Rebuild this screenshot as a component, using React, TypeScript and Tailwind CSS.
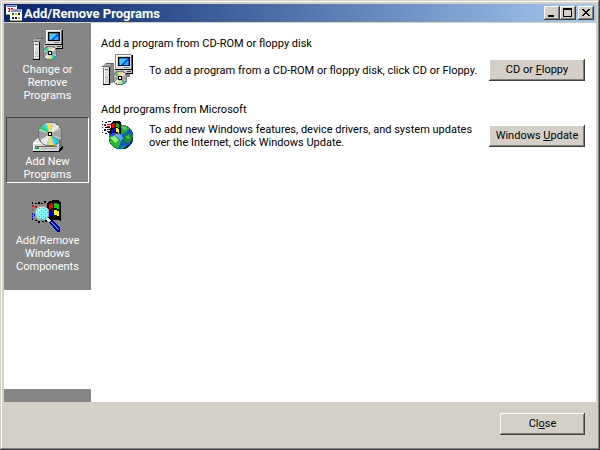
import React from "react";

const raised =
  "bg-[#d4d0c8] shadow-[inset_-1px_-1px_#404040,inset_1px_1px_#ffffff,inset_-2px_-2px_#808080]";

function Disc({ cx, cy, r }: { cx: number; cy: number; r: number }) {
  const at = (deg: number) => {
    const a = (deg * Math.PI) / 180;
    return `${cx + r * Math.cos(a)},${cy + r * Math.sin(a)}`;
  };
  const wedge = (from: number, to: number, fill: string) => (
    <polygon points={`${cx},${cy} ${at(from)} ${at((from + to) / 2)} ${at(to)}`} fill={fill} />
  );
  return (
    <g>
      <circle cx={cx} cy={cy} r={r} fill="#c6c6c6" />
      {wedge(150, 195, "#9c9c9c")}
      {wedge(-25, 20, "#a5a5a5")}
      {wedge(210, 228, "#31ce63")}
      {wedge(228, 246, "#21dee7")}
      {wedge(255, 280, "#f7e731")}
      {wedge(290, 325, "#e7e7e7")}
      {wedge(30, 48, "#31b5ce")}
      {wedge(48, 66, "#21dee7")}
      {wedge(75, 98, "#f7e731")}
      {wedge(110, 145, "#e7e7e7")}
      <circle cx={cx} cy={cy} r={r} fill="none" stroke="#737373" strokeWidth="1" />
      <rect x={cx - 2} y={cy - 2} width="4" height="4" fill="#000" />
      <rect x={cx - 1} y={cy - 1} width="2" height="2" fill="#fff" />
    </g>
  );
}

function ComputerIcon() {
  return (
    <svg width="32" height="32" viewBox="0 0 32 32" shapeRendering="crispEdges" aria-hidden="true">
      {/* keyboard base */}
      <path d="M11 15h19v5H11z" fill="#c6c6c6" />
      <path d="M13 19h18v1H13zM30 15h1v5h-1z" fill="#000" />
      <path d="M25 20h3v3h-3z" fill="#848484" />
      <path d="M25 17h4v1h-4z" fill="#424242" />
      {/* monitor */}
      <path d="M13 0h17v15H13z" fill="#d6d6d6" />
      <path d="M13 0h16v1H13zM13 0h1v14h-1z" fill="#848484" />
      <path d="M14 1h14v1H14zM14 1h1v12h-1z" fill="#fff" />
      <path d="M29 1h2v15h-2z" fill="#636363" />
      <path d="M30 1h1v15h-1zM13 15h18v1H13z" fill="#000" />
      <path d="M16 3h12v9H16z" fill="#000" />
      <path d="M17 4h10v7H17z" fill="#0052d6" />
      <path d="M17 4h9l-7 7h-2z" fill="#108cef" />
      <path d="M18 5h6l-6 6z" fill="#4ac6ff" />
      <path d="M21 11l5-5v5z" fill="#18b5f7" />
      <path d="M22 13h5v1h-5z" fill="#848484" />
      {/* tower */}
      <path d="M1 13h7v18H1z" fill="#dedede" />
      <path d="M0 12l4-3h8l-4 4H0z" fill="#adadad" />
      <path d="M0 12h7v1H0zM4 9h8v1H4z" fill="#636363" />
      <path d="M7 12l5-3v19l-5 3z" fill="#848484" />
      <path d="M7 13h1v18H7zM1 30h7v1H1z" fill="#000" />
      <path d="M1 14h1v16H1zM3 15h3v1H3z" fill="#737373" />
      <path d="M2 16h1v13H2z" fill="#fff" />
      <path d="M3 23h1v1H3zM5 23h1v1H5zM4 25h1v1H4zM3 27h1v1H3zM5 27h1v1H5z" fill="#9c9c9c" />
      <Disc cx={18} cy={24} r={7} />
    </svg>
  );
}

function DiscDriveIcon() {
  return (
    <svg width="32" height="32" viewBox="0 0 32 32" shapeRendering="crispEdges" aria-hidden="true">
      <path d="M1 21l6-5h23l-4 6v8H1z" fill="#e7e7e7" />
      <path d="M1 22h26v8H1z" fill="#d6d6d6" />
      <path d="M27 22l3-6v9l-3 5z" fill="#737373" />
      <path d="M1 22h25v1H1zM1 22h1v8H1z" fill="#fff" />
      <path d="M1 30h26v1H1zM27 29l3-4h1v2l-3 4h-1z" fill="#000" />
      <path d="M3 25h22v1H3z" fill="#636363" />
      <path d="M3 26h4v2H3z" fill="#00a531" />
      <path d="M4 26h1v1H4z" fill="#63ff63" />
      <path d="M9 27h16v1H9z" fill="#adadad" />
      <Disc cx={18} cy={13} r={12} />
    </svg>
  );
}

function MagnifierIcon() {
  return (
    <svg width="32" height="34" viewBox="0 0 32 34" shapeRendering="crispEdges" aria-hidden="true">
      <path d="M0 2h1v2H0zM3 3h2v1H3zM6 2h2v2H6zM9 3h2v1H9zM12 1h2v2h-2zM0 18h1v2H0zM3 20h2v1H3zM6 21h2v2H6zM10 21h2v1h-2zM13 20h2v2h-2z" fill="#000" />
      <path d="M0 5h2v2H0zM3 6h2v2H3zM0 9h1v1H0z" fill="#ff0000" />
      <path d="M0 13h1v2H0zM2 14h2v2H2zM0 16h1v1H0z" fill="#0000ff" />
      <path d="M15 3l3-2 4-1h4l3 2v19l-3-1h-4l-4 1-3-4z" fill="#000" />
      <path d="M17 4l4-1v5l-4 1z" fill="#ff0000" />
      <path d="M22 3l5 1v5l-5-1z" fill="#00d600" />
      <path d="M17 11l4-1v5l-4 1z" fill="#0000e7" />
      <path d="M22 10l5 1v5l-5-1z" fill="#ffff00" />
      <circle cx="10" cy="13" r="7" fill="#84f7f7" stroke="#a5a5a5" strokeWidth="1" />
      <path d="M5 10h1v1H5zM7 8h1v1H7zM9 10h1v1H9zM11 8h1v1h-1zM13 10h1v1h-1zM7 12h1v1H7zM5 14h1v1H5zM11 12h1v1h-1zM9 14h1v1H9zM13 14h1v1h-1zM15 12h1v1h-1zM7 16h1v1H7zM11 16h1v1h-1zM9 18h1v1H9zM13 17h1v1h-1z" fill="#00d6e7" />
      <path d="M6 9h3v1H7v2H6z" fill="#fff" />
      <path d="M14 19l2-1 3 3-2 2z" fill="#e7e7e7" />
      <path d="M17 22l3-2 8 8v4h-3z" fill="#000084" />
      <path d="M18 22l2-1 7 8-1 1z" fill="#0039ff" />
      <path d="M19 22h1l6 7h-1z" fill="#31deff" />
    </svg>
  );
}

function GlobeIcon() {
  return (
    <svg width="32" height="32" viewBox="0 0 32 32" shapeRendering="crispEdges" aria-hidden="true">
      <circle cx="19" cy="17" r="12.5" fill="#1852d6" />
      <path d="M20 29.500a12.500 12.500 0 0 0 11-13l-3 7z" fill="#001852" />
      <path d="M13 14h6l2 4-4 5-4-5z" fill="#5aa5f7" />
      <path d="M17 4l6 1 5 4-2 1-2 3-5 1-2-4z" fill="#21a542" />
      <path d="M20 6l4 1 1 2-4 1z" fill="#5ace5a" />
      <path d="M7 17l5-2 6 4 1 3-3 6-4-1-4-4z" fill="#29b539" />
      <path d="M8 18l4-2 4 4-3 3z" fill="#94ef73" />
      <path d="M22 16l5-3 4 3-2 5-4 2-4-3z" fill="#188c31" />
      <path d="M24 16l3-1 1 3-3 1z" fill="#42bd42" />
      <path d="M20 26l5-1-2 3-4 1z" fill="#089c31" />
      <path d="M0 1h1v1H0zM3 2h2v1H3zM6 1h3v1H6zM0 4h1v1H0zM0 12h1v1H0zM3 13h2v1H3zM6 12h3v1H6zM0 7h1v1H0zM3 7h5v1H3z" fill="#000" />
      <path d="M2 4h2v2H2zM5 4h4v1H5zM5 6h3v1H5z" fill="#e70000" />
      <path d="M2 9h2v2H2zM5 9h3v1H5zM5 11h4v1H5z" fill="#0000d6" />
      <path d="M9 3l3-2h4l3 1v12l-3-1h-4l-4 1z" fill="#000" />
      <path d="M10 4l3-1v4l-3 1z" fill="#ff0000" />
      <path d="M14 3l3 1v4l-3-1z" fill="#00c600" />
      <path d="M10 9l3-1v4l-3 1z" fill="#0000ff" />
      <path d="M14 8l3 1v4l-3-1z" fill="#ffff00" />
    </svg>
  );
}

function TitleIcon() {
  return (
    <svg width="16" height="16" viewBox="0 0 16 16" shapeRendering="crispEdges" aria-hidden="true">
      <path d="M0 0h11v10H0z" fill="#fff" />
      <path d="M0 0h11v1H0zM0 9h5v1H0z" fill="#a5a5a5" />
      <path d="M1 1h9v1H1z" fill="#5a6bbd" />
      <path d="M2 3h2v1H2zM5 3h2v1H5zM3 4h3v2H3zM2 6h2v1H2z" fill="#e70000" />
      <path d="M4 4h12v12H4z" fill="#fff" />
      <path d="M4 4h12v1H4zM4 15h12v1H4z" fill="#a5a5a5" />
      <path d="M5 5h10v2H5z" fill="#848cce" />
      <path d="M6 8h2v2H6z" fill="#008400" />
      <path d="M9 8h2v2H9zM12 12h2v2h-2z" fill="#d6c600" />
      <path d="M12 8h2v2h-2zM6 12h2v2H6z" fill="#212121" />
      <path d="M9 12h2v2H9z" fill="#0000c6" />
    </svg>
  );
}

function CaptionButton({ label, children }: { label: string; children: React.ReactNode }) {
  return (
    <button type="button" aria-label={label} className={`h-[14px] w-4 ${raised}`}>
      <svg width="16" height="14" viewBox="0 0 16 14" shapeRendering="crispEdges" aria-hidden="true">
        {children}
      </svg>
    </button>
  );
}

function NavItem({ icon, lines, selected = false }: { icon: React.ReactNode; lines: string[]; selected?: boolean }) {
  return (
    <button
      type="button"
      aria-current={selected ? "page" : undefined}
      className={`flex flex-col items-center gap-[2px] border px-1 pt-[3px] text-white ${
        selected ? "border-t-[#404040] border-r-white border-b-white border-l-[#404040]" : "border-transparent"
      }`}
    >
      <span className="flex h-8 items-start">{icon}</span>
      <span className="pb-px">
        {lines.map((line) => (
          <span key={line} className="block whitespace-nowrap">
            {line}
          </span>
        ))}
      </span>
    </button>
  );
}

function PushButton({ children, width }: { children: React.ReactNode; width: string }) {
  return (
    <button type="button" className={`h-[22px] shrink-0 whitespace-nowrap pb-px ${width} ${raised}`}>
      {children}
    </button>
  );
}

function Section({
  title,
  icon,
  lines,
  action,
}: {
  title: string;
  icon: React.ReactNode;
  lines: string[];
  action: React.ReactNode;
}) {
  return (
    <section>
      <h2 className="mb-1">{title}</h2>
      <div className="flex items-center">
        <span className="ml-px w-[47px] shrink-0">{icon}</span>
        <p className="min-w-0 flex-1 whitespace-nowrap">
          {lines.map((line) => (
            <span key={line} className="block">
              {line}
            </span>
          ))}
        </p>
        {action}
      </div>
    </section>
  );
}

export default function App() {
  return (
    <div className="flex min-h-screen flex-col bg-[#d4d0c8] p-1 font-['Tahoma','Roboto','DejaVu_Sans_Condensed',sans-serif] text-[11px] leading-[13px] text-black shadow-[inset_-1px_-1px_#404040,inset_1px_1px_#d4d0c8,inset_-2px_-2px_#808080,inset_2px_2px_#ffffff]">
      <header className="flex h-[18px] items-center bg-linear-to-r from-[#0a246a] to-[#a6caf0] pr-[2px] pl-[2px]">
        <TitleIcon />
        <h1 className="ml-[2px] flex-1 text-[13px] font-bold text-white">Add/Remove Programs</h1>
        <div className="flex">
          <CaptionButton label="Minimize">
            <path d="M4 9h6v2H4z" />
          </CaptionButton>
          <CaptionButton label="Maximize">
            <path d="M3 2h9v9H3zM4 4v6h7V4z" fillRule="evenodd" />
          </CaptionButton>
          <span className="w-[2px]" />
          <CaptionButton label="Close window">
            <path d="M4 3h2v1h1v1h2V4h1V3h2v1h-1v1h-1v1H9v1h1v1h1v1h1v1h-2V9H9V8H7v1H6v1H4V9h1V8h1V7h1V6H6V5H5V4H4z" />
          </CaptionButton>
        </div>
      </header>

      <div className="mt-px flex flex-1 bg-white">
        <div className="flex w-[87px] shrink-0 flex-col">
          <nav className="flex flex-col gap-[13px] bg-[#868686] px-[2px] pt-[2px] pb-[15px]">
            <NavItem icon={<ComputerIcon />} lines={["Change or", "Remove", "Programs"]} />
            <NavItem icon={<DiscDriveIcon />} lines={["Add New", "Programs"]} selected />
            <NavItem icon={<MagnifierIcon />} lines={["Add/Remove", "Windows", "Components"]} />
          </nav>
          <div className="flex-1" />
          <div className="h-[13px] bg-[#868686]" />
        </div>
        <main className="flex min-w-0 flex-1 flex-col gap-[17px] pt-[14px] pr-[11px] pl-[10px]">
          <Section
            title="Add a program from CD-ROM or floppy disk"
            icon={<ComputerIcon />}
            lines={["To add a program from a CD-ROM or floppy disk, click CD or Floppy."]}
            action={
              <PushButton width="w-24">
                CD or <u>F</u>loppy
              </PushButton>
            }
          />
          <Section
            title="Add programs from Microsoft"
            icon={<GlobeIcon />}
            lines={[
              "To add new Windows features, device drivers, and system updates",
              "over the Internet, click Windows Update.",
            ]}
            action={
              <PushButton width="w-24">
                Windows <u>U</u>pdate
              </PushButton>
            }
          />
        </main>
      </div>

      <footer className="flex justify-end py-[11px] pr-[11px]">
        <PushButton width="w-[85px]">
          Cl<u>o</u>se
        </PushButton>
      </footer>
    </div>
  );
}
